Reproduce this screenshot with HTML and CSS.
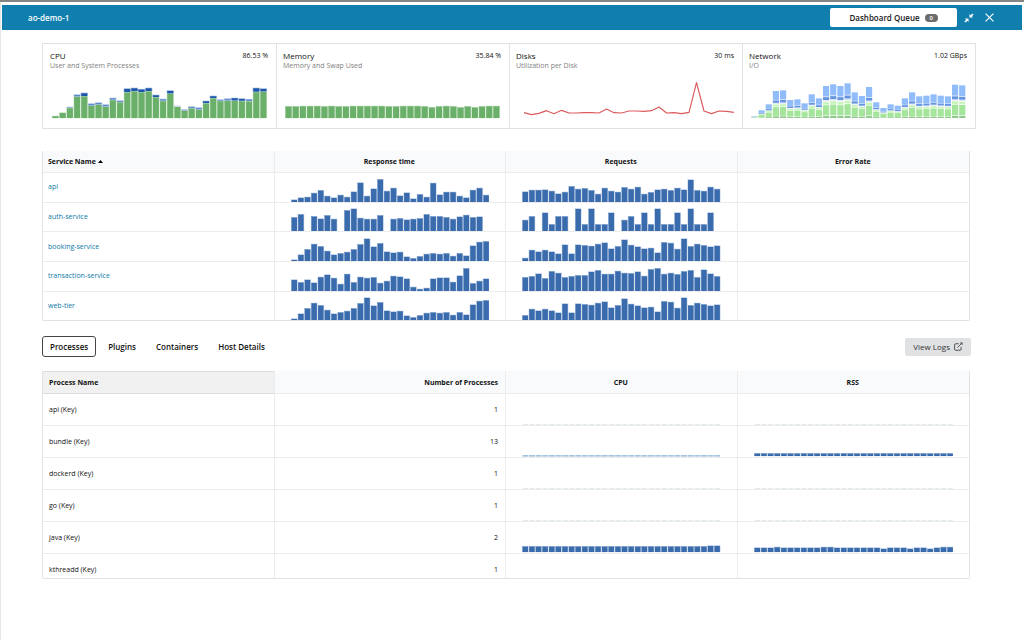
FILE: index.html
```html
<!DOCTYPE html>
<html lang="en">
<head>
<meta charset="utf-8">
<title>ao-demo-1</title>
<link rel="stylesheet" href="styles.css">
</head>
<body>
<div class="page">
  <header class="topbar">
    <h1 class="topbar-title">ao-demo-1</h1>
    <button class="queue" type="button">Dashboard Queue <span class="badge">0</span></button>
    <button class="icon-button" type="button" aria-label="Collapse">
      <svg width="10" height="10" viewBox="0 0 20 20"><path d="M11 9V2l2.300 2.300L17 .8 19.200 3l-3.500 3.700L18 9zM9 11v7l-2.300-2.300L3 19.200.8 17l3.500-3.700L2 11z" fill="#fff"/></svg>
    </button>
    <button class="icon-button" type="button" aria-label="Close">
      <svg width="9" height="9" viewBox="0 0 9 9"><path d="M.6.6l7.800 7.800M8.400.6L.6 8.400" stroke="#fff" stroke-width="1.200" fill="none"/></svg>
    </button>
  </header>

  <main class="content">
    <section class="cards">
      <article class="card">
        <div class="card-head"><h2>CPU</h2><span>86.53 %</span></div>
        <p>User and System Processes</p>
        <svg class="card-chart" data-chart="cpu"></svg>
      </article>
      <article class="card">
        <div class="card-head"><h2>Memory</h2><span>35.84 %</span></div>
        <p>Memory and Swap Used</p>
        <svg class="card-chart" data-chart="memory"></svg>
      </article>
      <article class="card">
        <div class="card-head"><h2>Disks</h2><span>30 ms</span></div>
        <p>Utilization per Disk</p>
        <svg class="card-chart" data-chart="disks"></svg>
      </article>
      <article class="card">
        <div class="card-head"><h2>Network</h2><span>1.02 GBps</span></div>
        <p>I/O</p>
        <svg class="card-chart" data-chart="network"></svg>
      </article>
    </section>

    <div class="panel services">
      <table>
        <thead>
          <tr>
            <th class="name" scope="col" aria-sort="ascending">Service Name <svg width="5" height="3" viewBox="0 0 5 3"><path d="M0 3L2.500 0 5 3z"/></svg></th>
            <th scope="col">Response time</th>
            <th scope="col">Requests</th>
            <th scope="col">Error Rate</th>
          </tr>
        </thead>
        <tbody>
          <tr><td><a href="#api">api</a></td><td class="plot"><svg data-chart="apiTime"></svg></td><td class="plot"><svg data-chart="apiReq"></svg></td><td></td></tr>
          <tr><td><a href="#auth-service">auth-service</a></td><td class="plot"><svg data-chart="authTime"></svg></td><td class="plot"><svg data-chart="authReq"></svg></td><td></td></tr>
          <tr><td><a href="#booking-service">booking-service</a></td><td class="plot"><svg data-chart="bookingTime"></svg></td><td class="plot"><svg data-chart="bookingReq"></svg></td><td></td></tr>
          <tr><td><a href="#transaction-service">transaction-service</a></td><td class="plot"><svg data-chart="transactionTime"></svg></td><td class="plot"><svg data-chart="transactionReq"></svg></td><td></td></tr>
          <tr><td><a href="#web-tier">web-tier</a></td><td class="plot"><svg data-chart="webTime"></svg></td><td class="plot"><svg data-chart="webReq"></svg></td><td></td></tr>
        </tbody>
      </table>
    </div>

    <div class="toolbar">
      <nav class="tabs">
        <button class="tab active" type="button">Processes</button>
        <button class="tab" type="button">Plugins</button>
        <button class="tab" type="button">Containers</button>
        <button class="tab" type="button">Host Details</button>
      </nav>
      <button class="logs" type="button">View Logs
        <svg width="9" height="9" viewBox="0 0 18 18" fill="none" stroke="#444" stroke-width="1.800"><path d="M9.500 3.500H3.200Q1.200 3.500 1.200 5.500v9q0 2 2 2h9q2 0 2-2V9.500M7 11L15.500 2.500"/><path d="M11.500 1h5.500v5.500z" fill="#444" stroke="none"/></svg>
      </button>
    </div>

    <div class="panel processes">
      <table>
        <thead>
          <tr><th class="name selected" scope="col">Process Name</th><th class="number" scope="col">Number of Processes</th><th scope="col">CPU</th><th scope="col">RSS</th></tr>
        </thead>
        <tbody>
          <tr><td>api (Key)</td><td class="number">1</td><td class="plot"><svg data-chart="idle"></svg></td><td class="plot"><svg data-chart="idle"></svg></td></tr>
          <tr><td>bundle (Key)</td><td class="number">13</td><td class="plot"><svg data-chart="bundleCpu"></svg></td><td class="plot"><svg data-chart="bundleRss"></svg></td></tr>
          <tr><td>dockerd (Key)</td><td class="number">1</td><td class="plot"><svg data-chart="idle"></svg></td><td class="plot"><svg data-chart="idle"></svg></td></tr>
          <tr><td>go (Key)</td><td class="number">1</td><td class="plot"><svg data-chart="idle"></svg></td><td class="plot"><svg data-chart="idle"></svg></td></tr>
          <tr><td>java (Key)</td><td class="number">2</td><td class="plot"><svg data-chart="javaCpu"></svg></td><td class="plot"><svg data-chart="javaRss"></svg></td></tr>
          <tr><td>kthreadd (Key)</td><td class="number">1</td><td class="plot"></td><td class="plot"></td></tr>
        </tbody>
      </table>
    </div>
  </main>
</div>
<script src="charts.js"></script>
</body>
</html>
```

FILE: styles.css
```css
* { box-sizing: border-box; }

body {
  margin: 0;
  background: #fff;
  color: #111;
  font: 7px/10px "Open Sans", "Noto Sans", sans-serif;
  border-top: 2px solid #858585;
}

button {
  font: inherit;
  color: inherit;
  border: 0;
  padding: 0;
  background: none;
}

h1, h2, p { margin: 0; font-weight: 400; }

.page {
  min-height: calc(100vh - 2px);
  padding: 3px 2px 0 0;
  border-left: 1px solid #e6e6e6;
}

.topbar {
  display: flex;
  align-items: center;
  height: 25px;
  margin-left: 1px;
  padding: 0 28px 0 26px;
  background: #107fad;
  color: #fff;
}

.topbar-title {
  flex: 1;
  font-size: 8px;
  font-weight: 600;
}

.queue {
  display: flex;
  align-items: center;
  justify-content: center;
  gap: 5px;
  width: 127px;
  height: 19px;
  margin-right: 7px;
  border-radius: 2px;
  background: #fff;
  color: #1a1a1a;
  font-size: 8px;
  font-weight: 600;
}

.badge {
  width: 13px;
  border-radius: 4px;
  background: #6b6b6b;
  color: #fff;
  font-size: 6px;
  line-height: 8px;
}

.icon-button { display: flex; }
.icon-button + .icon-button { margin-left: 11px; }

.content { padding: 13px 46px 0 41px; }

.cards {
  display: grid;
  grid-template-columns: repeat(4, 1fr);
  border: 1px solid #e2e2e2;
}

.card {
  padding: 7px 8px 10px 6px;
  border-left: 1px solid #e2e2e2;
}

.card:first-child { border-left: 0; padding-left: 7px; }

.card-head {
  display: flex;
  justify-content: space-between;
}

.card-head h2 { font-size: 8px; font-weight: 400; }
.card p { color: #808080; }

.card-chart {
  display: block;
  width: 100%;
  height: 37px;
  padding: 0 1px 0 2px;
  margin-top: 10px;
  overflow: visible;
}

.panel {
  margin-right: 6px;
  overflow: hidden;
  border: 1px solid #e2e2e2;
  border-top: 0;
  border-radius: 0 0 2px 2px;
}

table {
  width: 100%;
  table-layout: fixed;
  border-collapse: separate;
  border-spacing: 0;
}

th, td {
  padding: 0 7px 0 6px;
  border-right: 1px solid #ececec;
  border-bottom: 1px solid #ececec;
  text-align: left;
}

th:last-child, td:last-child { border-right: 0; }
tbody tr:last-child td { border-bottom: 0; }

th {
  height: 22px;
  background: #f8fafc;
  font-weight: 700;
  text-align: center;
}

th.name { text-align: left; }
th.number, td.number { text-align: right; }
th.selected { background: #f1f1f1; border-top: 1px solid #ddd; border-bottom-color: #ddd; }

td.plot {
  padding: 0 16px;
  vertical-align: bottom;
}

.plot svg {
  display: block;
  width: 100%;
  height: 24px;
}

.services { margin-top: 22px; }
.services table { height: 169px; }
.services th.name, .services td:first-child { padding-left: 5px; }
.services th svg { vertical-align: 1px; }
.services a { color: #0d7aa5; text-decoration: none; }

.toolbar {
  display: flex;
  justify-content: space-between;
  align-items: center;
  margin: 15px 5px 14px 0;
}

.tabs { display: flex; gap: 4px; }

.tab {
  height: 21px;
  padding: 0 7px;
  border: 1px solid transparent;
  border-radius: 3px;
  font-size: 8px;
  font-weight: 600;
}

.tab.active { border-color: #444; }

.logs {
  display: flex;
  align-items: center;
  gap: 4px;
  height: 18px;
  padding: 0 8px;
  border-radius: 2px;
  background: #e0e1e3;
  color: #333;
  font-size: 8px;
}

.processes { max-height: 208px; }
.processes th { height: 23px; padding-top: 1px; }
.processes th.selected { padding-top: 0; }
.processes td { height: 32px; }
```

FILE: charts.js
```js
const SVG = "http://www.w3.org/2000/svg";
const BLUE = ["#3a6bad", "#2c60a8", "#c3d4ea"];
const GREEN = ["#6bb06a", "#5aa45a", "#d2e9d0"];

const bookingTime = [5,20,36,52,45,31,20,24,28,36,51,68,44,54,29,26,28,14,9,15,22,24,22,24,16,24,17,47,58,60];
const bookingReq = [10,34,29,34,29,23,50,23,50,48,46,52,56,38,45,65,49,44,38,40,26,57,55,37,68,45,52,48,44,47];

const bars = {
  apiTime: [8,14,16,28,36,19,14,22,16,32,59,19,41,69,34,43,20,29,11,24,16,58,23,31,31,19,14,37,43,22],
  authTime: [42,51,0,45,38,48,37,0,63,68,40,37,37,48,0,37,39,35,37,39,51,45,45,42,37,44,49,42,44,0],
  bookingTime: bookingTime,
  transactionTime: [35,27,35,26,43,50,40,22,52,27,43,40,42,25,31,46,44,38,13,7,10,38,41,41,28,47,69,24,31,38],
  webTime: bookingTime,
  apiReq: [32,37,37,38,34,26,31,48,40,42,36,25,43,34,31,45,40,46,25,30,38,40,36,43,38,68,36,34,46,40],
  authReq: [34,45,0,56,21,45,45,0,68,21,68,21,21,56,0,34,45,21,56,21,68,21,21,56,21,68,21,21,56,0],
  bookingReq: bookingReq,
  transactionReq: [42,45,53,39,60,55,42,45,48,48,59,63,52,52,61,55,54,59,46,66,69,52,55,51,60,63,42,65,53,45],
  webReq: bookingReq.map((v, i) => i === 0 ? 15 : v),
  bundleRss: Array(30).fill(9),
  javaCpu: Array.from({ length: 30 }, (_, i) => i > 27 ? 20 : 18),
  javaRss: Array.from({ length: 30 }, (_, i) => [3, 10, 11, 28, 29].includes(i) ? 16 : [19, 23, 26].includes(i) ? 11 : 14)
};

const cpuTotal = [7,17,34,71,76,44,47,41,61,53,89,91,87,91,70,58,83,37,26,35,32,52,67,56,59,61,59,57,91,89];
const cpuUser = [7,17,31,65,66,38,41,35,55,48,78,81,78,81,63,52,74,35,23,30,26,45,60,52,53,53,52,51,79,80];
const memory = [36,36,37,37,37,36,37,36,36,37,37,37,37,37,36,36,37,37,37,36,33,36,37,36,33,36,33,36,37,37];
const network = [5,23,41,81,83,54,56,44,71,59,96,101,96,104,77,66,93,47,30,41,37,59,77,65,67,71,67,65,100,98];
const disks = [16,10,14,22,13,23,15,15,16,16,15,27,16,15,21,21,20,22,33,15,16,13,17,106,21,13,21,20,17];

function add(svg, name, attrs) {
  const el = document.createElementNS(SVG, name);
  for (const key in attrs) el.setAttribute(key, attrs[key]);
  svg.appendChild(el);
}

function frame(svg, width, height) {
  svg.setAttribute("viewBox", `0 0 ${width} ${height}`);
  svg.setAttribute("preserveAspectRatio", "none");
}

function block(svg, x, pitch, floor, low, high, colors) {
  if (high <= low) return;
  add(svg, "rect", { x: x, y: floor - high, width: pitch, height: high - low, fill: colors[2] });
  const h = high - low - 2;
  if (h > 0) add(svg, "rect", { x: x + 2, y: floor - high + 2, width: pitch - 4, height: h, fill: colors[0], stroke: colors[1], "stroke-width": 0.5 });
}

const card = { width: 645, height: 111 };
const pitch = card.width / 30;

const cards = {
  cpu(svg) {
    cpuTotal.forEach((total, i) => {
      const soft = total - cpuUser[i] < 7;
      block(svg, i * pitch, pitch, card.height, 0, cpuUser[i], GREEN);
      block(svg, i * pitch, pitch, card.height, cpuUser[i], total, soft ? ["#5d8ccc", "#5d8ccc", "#b5cae8"] : ["#1f58ab", "#1f58ab", "#a4bfe0"]);
    });
  },
  memory(svg) {
    memory.forEach((v, i) => block(svg, i * pitch, pitch, card.height, 0, v, GREEN));
  },
  disks(svg) {
    const points = disks.map((v, i) => `${18 + i * 22.5},${card.height - v}`).join(" ");
    add(svg, "polyline", { points: points, fill: "none", stroke: "#dc5a5c", "stroke-width": 3.5, "stroke-linejoin": "round" });
  },
  network(svg) {
    const layers = [
      [0, .06, "#8fc78c"], [.08, .4, "#a5e59b"], [.42, .5, "#c8f5bb"],
      [.52, .55, "#dfe5fb"], [.56, .65, "#6595df"], [.67, 1, "#90bdfa"]
    ];
    network.forEach((v, i) => {
      layers.forEach(([low, high, color]) => {
        add(svg, "rect", { x: i * pitch + 1, y: card.height - v * high, width: pitch - 3, height: v * (high - low), fill: color });
      });
    });
  }
};

document.querySelectorAll("svg[data-chart]").forEach(svg => {
  const name = svg.dataset.chart;
  if (cards[name]) {
    frame(svg, card.width, card.height);
    cards[name](svg);
    return;
  }
  frame(svg, 600, 72);
  for (let i = 0; i < 30; i++) {
    if (name === "idle") add(svg, "rect", { x: i * 20 + 3, y: 69, width: 15, height: 3, fill: "#e1ebf0" });
    else if (name === "bundleCpu") add(svg, "rect", { x: i * 20 + 1, y: 66, width: 18, height: 5, fill: "#a3c2dd" });
    else block(svg, i * 20, 20, name.endsWith("Rss") || name === "javaCpu" ? 69 : 72, 0, bars[name][i], BLUE);
  }
});
```
